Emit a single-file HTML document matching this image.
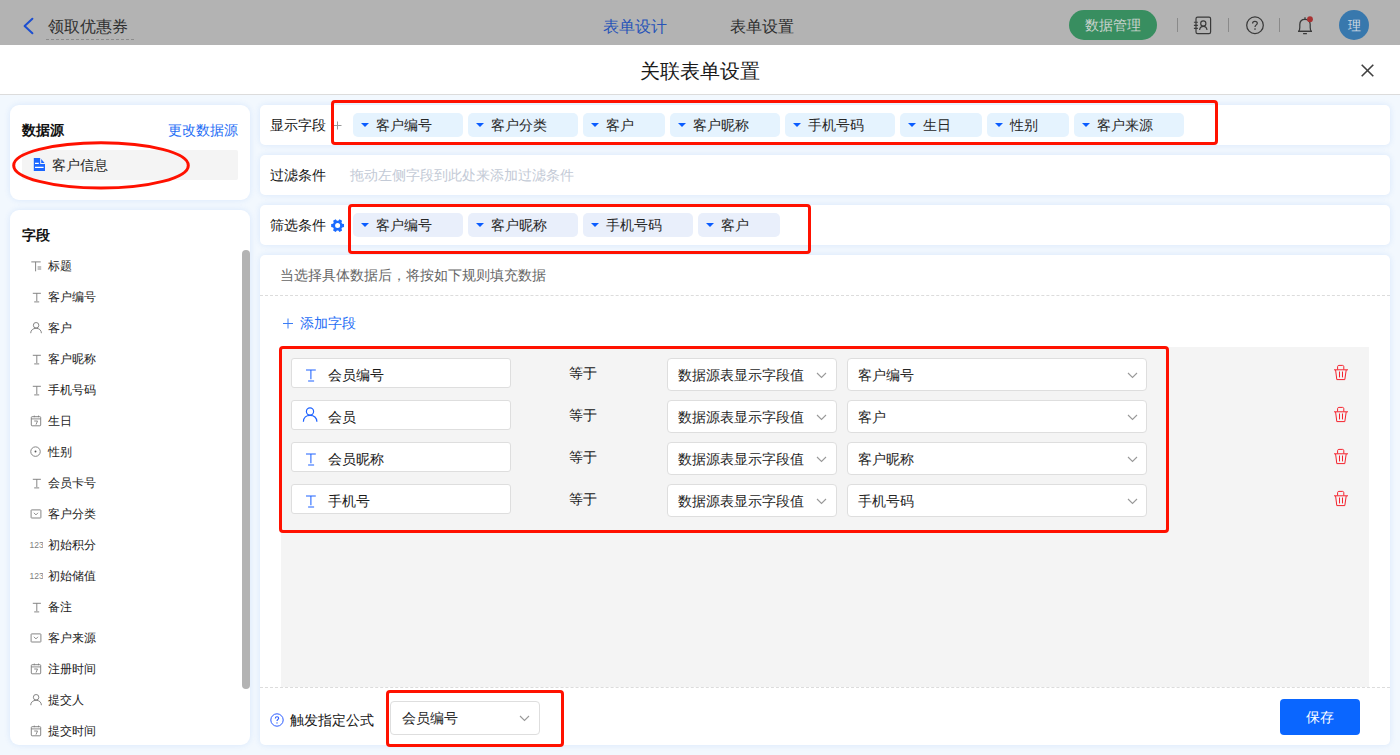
<!DOCTYPE html>
<html><head><meta charset="utf-8">
<style>
*{margin:0;padding:0;box-sizing:border-box}
html,body{width:1400px;height:755px;overflow:hidden}
body{font-family:"Liberation Sans",sans-serif;font-size:14px;color:#333;background:#f2f8fe;position:relative}
.a{position:absolute}
.t{position:absolute;white-space:nowrap;line-height:20px}
#top{left:0;top:0;width:1400px;height:45px;background:#b3b3b3}
#mh{left:0;top:45px;width:1400px;height:50px;background:#fff;border-bottom:1px solid #dcdcdc}
.panel{position:absolute;background:#fff;border-radius:9px;box-shadow:0 0 6px rgba(30,110,230,0.12)}
.rp{position:absolute;background:#fff;border-radius:5px;left:260px;width:1130px;box-shadow:0 0 6px rgba(30,110,230,0.12)}
.tag{position:absolute;height:24px;border-radius:5px;background:#e5f3fe}
.tag i{position:absolute;left:8.3px;top:10px;width:0;height:0;border-left:4.3px solid transparent;border-right:4.3px solid transparent;border-top:4.3px solid #0a5cff}
.tag span{position:absolute;left:23px;top:2px;line-height:20px;color:#262626;white-space:nowrap}
.tag2{background:#e9effb}
.red{position:absolute;border:3px solid #ff1100;border-radius:4px}
.inp{position:absolute;left:291px;width:220px;height:30px;background:#fff;border:1px solid #dedede;border-radius:3px}
.inp span{position:absolute;left:36px;top:6px;line-height:20px;color:#1a1a1a}
.inp svg{position:absolute}
.eq{position:absolute;left:569px;line-height:20px;color:#141414}
.sel{position:absolute;height:33px;background:#fff;border:1px solid #dedede;border-radius:4px}
.sel span{position:absolute;left:10px;top:6px;line-height:20px;color:#262626;white-space:nowrap}
.sel svg{position:absolute;top:13px}
.trash{position:absolute;left:1333px}
</style></head><body>
<div id="top" class="a">
<svg class="a" style="left:20px;top:16px" width="16" height="20" viewBox="0 0 16 20"><path d="M12.4 2.8 L4.6 10 L12.4 17.2" fill="none" stroke="#1d4fd0" stroke-width="2" stroke-linecap="round" stroke-linejoin="round"/></svg>
<div class="t" style="left:48px;top:17px;font-size:16px;color:#2e2e2e">领取优惠券</div>
<div class="a" style="left:46px;top:39px;width:88px;border-top:1px dashed #8c8c8c"></div>
<div class="t" style="left:603px;top:17px;font-size:16px;color:#2754b8">表单设计</div>
<div class="t" style="left:730px;top:17px;font-size:16px;color:#2e2e2e">表单设置</div>
<div class="a" style="left:1069px;top:10px;width:88px;height:30px;border-radius:15px;background:#388e60"></div>
<div class="t" style="left:1085px;top:15px;font-size:14px;color:#cad3ce">数据管理</div>
<div class="a" style="left:1177px;top:18px;width:1px;height:14px;background:#8a8a8a"></div>
<div class="a" style="left:1228px;top:18px;width:1px;height:14px;background:#8a8a8a"></div>
<div class="a" style="left:1279px;top:18px;width:1px;height:14px;background:#8a8a8a"></div>
<div class="a" style="left:1339px;top:10px;width:30px;height:30px;border-radius:15px;background:#3878ad"></div>
<div class="t" style="left:1348px;top:16px;font-size:13px;color:#d0dbe4">理</div>
<svg class="a" style="left:1190px;top:14px" width="24" height="24" viewBox="0 0 24 24"><rect x="6" y="3.2" width="14.6" height="16.4" rx="1.6" stroke="#3a3a3a" stroke-width="1.2" fill="none"/><circle cx="13.3" cy="9.4" r="2.6" stroke="#3a3a3a" stroke-width="1.15" fill="none"/><path d="M9.6 16C9.9 13.6 11.4 12.3 13.3 12.3S16.7 13.6 17 16" stroke="#3a3a3a" stroke-width="1.15" fill="none"/><path d="M3.9 8.3H7.9M3.9 11.4H7.9M3.9 14.4H7.9" stroke="#3a3a3a" stroke-width="1.1"/></svg>
<svg class="a" style="left:1243px;top:13px" width="24" height="24" viewBox="0 0 24 24"><circle cx="12" cy="12.2" r="8.3" stroke="#3a3a3a" stroke-width="1.25" fill="none"/><path d="M9.6 10.4C9.6 9.1 10.6 8.3 11.9 8.3S14.3 9.1 14.3 10.3C14.3 11.8 12 12 12 14" stroke="#3a3a3a" stroke-width="1.25" fill="none"/><circle cx="12" cy="16.1" r="0.8" fill="#3a3a3a"/></svg>
<svg class="a" style="left:1293px;top:13px" width="24" height="24" viewBox="0 0 24 24"><path d="M5.6 18.3C6.6 17.2 6.8 16 6.8 14.4V11.6C6.8 8.4 8.8 6.3 12 6.3S17.2 8.4 17.2 11.6V14.4C17.2 16 17.4 17.2 18.4 18.3Z" stroke="#3a3a3a" stroke-width="1.25" fill="none" stroke-linejoin="round"/><path d="M5 18.3H19M10.1 20.5H13.9M12 4.2V6.3" stroke="#3a3a3a" stroke-width="1.25"/><circle cx="17" cy="6.2" r="2.9" fill="#a83232"/></svg>
</div>
<div id="mh" class="a">
<div class="t" style="left:640px;top:13px;font-size:20px;line-height:26px;color:#1a1a1a">关联表单设置</div>
<svg class="a" style="left:1360px;top:17.5px" width="15" height="15" viewBox="0 0 15 15"><path d="M1.7 1.7 L13.3 13.3 M13.3 1.7 L1.7 13.3" stroke="#404040" stroke-width="1.6"/></svg>
</div>
<div class="panel" style="left:10px;top:105px;width:240px;height:95px"></div>
<div class="t" style="left:22px;top:120px;font-weight:bold;color:#111">数据源</div>
<div class="t" style="left:168px;top:120px;color:#1f6ef5">更改数据源</div>
<div class="a" style="left:22px;top:150px;width:216px;height:30px;background:#f4f4f4;border-radius:2px"></div>
<div class="t" style="left:52px;top:155px;color:#262626">客户信息</div>
<svg class="a" style="left:33px;top:157px" width="13" height="15" viewBox="0 0 13 15"><path d="M0.8 1H7.2V7H12V14H0.8Z" fill="#1a66ff"/><path d="M8.2 2V6H11.6Z" fill="#1a66ff"/><path d="M2 6.4H5.8M2 10.4H10.6" stroke="#fff" stroke-width="1.1"/></svg>
<svg class="a" style="left:0;top:130px" width="200" height="70" viewBox="0 130 200 70"><ellipse cx="101" cy="165.4" rx="87.3" ry="22.6" fill="none" stroke="#ff1100" stroke-width="3"/></svg>
<div class="panel" style="left:10px;top:210px;width:240px;height:535px"></div>
<div class="t" style="left:22px;top:225px;font-weight:bold;color:#111">字段</div>
<div class="a" style="left:242px;top:250px;width:8px;height:439px;border-radius:4px;background:#b3b3b3"></div>
<svg class="a" style="left:29px;top:258.5px" width="14" height="14" viewBox="0 0 14 14"><path d="M2.3 2.9H11.7M6.6 2.9V12.3M8.6 8H12.2M8.6 10H12.2" stroke="#808080" stroke-width="0.95" fill="none"/></svg>
<div class="t" style="left:48px;top:256.0px;font-size:12px;color:#222">标题</div>
<svg class="a" style="left:29px;top:289.5px" width="14" height="14" viewBox="0 0 14 14"><path d="M3.8 3.3H11.9M7.8 3.3V11.1M5.2 11.9H10.2" stroke="#808080" stroke-width="0.95" fill="none"/></svg>
<div class="t" style="left:48px;top:287.0px;font-size:12px;color:#222">客户编号</div>
<svg class="a" style="left:29px;top:320.5px" width="14" height="14" viewBox="0 0 14 14"><circle cx="7.1" cy="4.25" r="2.75" stroke="#808080" stroke-width="0.95" fill="none"/><path d="M1.7 12.2C1.7 9.2 4 7.3 7.1 7.3S12.4 9.2 12.4 12.2" stroke="#808080" stroke-width="0.95" fill="none"/></svg>
<div class="t" style="left:48px;top:318.0px;font-size:12px;color:#222">客户</div>
<svg class="a" style="left:29px;top:351.5px" width="14" height="14" viewBox="0 0 14 14"><path d="M3.8 3.3H11.9M7.8 3.3V11.1M5.2 11.9H10.2" stroke="#808080" stroke-width="0.95" fill="none"/></svg>
<div class="t" style="left:48px;top:349.0px;font-size:12px;color:#222">客户昵称</div>
<svg class="a" style="left:29px;top:382.5px" width="14" height="14" viewBox="0 0 14 14"><path d="M3.8 3.3H11.9M7.8 3.3V11.1M5.2 11.9H10.2" stroke="#808080" stroke-width="0.95" fill="none"/></svg>
<div class="t" style="left:48px;top:380.0px;font-size:12px;color:#222">手机号码</div>
<svg class="a" style="left:29px;top:413.5px" width="14" height="14" viewBox="0 0 14 14"><rect x="2.3" y="2.7" width="9.4" height="9.1" rx="0.8" stroke="#808080" stroke-width="0.95" fill="none"/><path d="M2.3 4.9H11.7M5.3 1.6V3.2M9.5 1.6V3.2M5.2 7H8.5L7 10.6" stroke="#808080" stroke-width="0.9" fill="none"/></svg>
<div class="t" style="left:48px;top:411.0px;font-size:12px;color:#222">生日</div>
<svg class="a" style="left:29px;top:444.5px" width="14" height="14" viewBox="0 0 14 14"><circle cx="6.5" cy="6.6" r="4.75" stroke="#808080" stroke-width="0.95" fill="none"/><circle cx="6.5" cy="6.5" r="0.95" fill="#555"/></svg>
<div class="t" style="left:48px;top:442.0px;font-size:12px;color:#222">性别</div>
<svg class="a" style="left:29px;top:475.5px" width="14" height="14" viewBox="0 0 14 14"><path d="M3.8 3.3H11.9M7.8 3.3V11.1M5.2 11.9H10.2" stroke="#808080" stroke-width="0.95" fill="none"/></svg>
<div class="t" style="left:48px;top:473.0px;font-size:12px;color:#222">会员卡号</div>
<svg class="a" style="left:29px;top:506.5px" width="14" height="14" viewBox="0 0 14 14"><rect x="2.1" y="2.9" width="9.8" height="8.1" rx="0.5" stroke="#808080" stroke-width="0.95" fill="none"/><path d="M4.9 5.8L6.95 7.9L9 5.8" stroke="#808080" stroke-width="0.9" fill="none"/></svg>
<div class="t" style="left:48px;top:504.0px;font-size:12px;color:#222">客户分类</div>
<svg class="a" style="left:29px;top:537.5px" width="14" height="14" viewBox="0 0 14 14"><text x="0.5" y="9.5" font-size="8.5" font-family="Liberation Sans" fill="#808080">123</text></svg>
<div class="t" style="left:48px;top:535.0px;font-size:12px;color:#222">初始积分</div>
<svg class="a" style="left:29px;top:568.5px" width="14" height="14" viewBox="0 0 14 14"><text x="0.5" y="9.5" font-size="8.5" font-family="Liberation Sans" fill="#808080">123</text></svg>
<div class="t" style="left:48px;top:566.0px;font-size:12px;color:#222">初始储值</div>
<svg class="a" style="left:29px;top:599.5px" width="14" height="14" viewBox="0 0 14 14"><path d="M3.8 3.3H11.9M7.8 3.3V11.1M5.2 11.9H10.2" stroke="#808080" stroke-width="0.95" fill="none"/></svg>
<div class="t" style="left:48px;top:597.0px;font-size:12px;color:#222">备注</div>
<svg class="a" style="left:29px;top:630.5px" width="14" height="14" viewBox="0 0 14 14"><rect x="2.1" y="2.9" width="9.8" height="8.1" rx="0.5" stroke="#808080" stroke-width="0.95" fill="none"/><path d="M4.9 5.8L6.95 7.9L9 5.8" stroke="#808080" stroke-width="0.9" fill="none"/></svg>
<div class="t" style="left:48px;top:628.0px;font-size:12px;color:#222">客户来源</div>
<svg class="a" style="left:29px;top:661.5px" width="14" height="14" viewBox="0 0 14 14"><rect x="2.3" y="2.7" width="9.4" height="9.1" rx="0.8" stroke="#808080" stroke-width="0.95" fill="none"/><path d="M2.3 4.9H11.7M5.3 1.6V3.2M9.5 1.6V3.2M5.2 7H8.5L7 10.6" stroke="#808080" stroke-width="0.9" fill="none"/></svg>
<div class="t" style="left:48px;top:659.0px;font-size:12px;color:#222">注册时间</div>
<svg class="a" style="left:29px;top:692.5px" width="14" height="14" viewBox="0 0 14 14"><circle cx="7.1" cy="4.25" r="2.75" stroke="#808080" stroke-width="0.95" fill="none"/><path d="M1.7 12.2C1.7 9.2 4 7.3 7.1 7.3S12.4 9.2 12.4 12.2" stroke="#808080" stroke-width="0.95" fill="none"/></svg>
<div class="t" style="left:48px;top:690.0px;font-size:12px;color:#222">提交人</div>
<svg class="a" style="left:29px;top:723.5px" width="14" height="14" viewBox="0 0 14 14"><rect x="2.3" y="2.7" width="9.4" height="9.1" rx="0.8" stroke="#808080" stroke-width="0.95" fill="none"/><path d="M2.3 4.9H11.7M5.3 1.6V3.2M9.5 1.6V3.2M5.2 7H8.5L7 10.6" stroke="#808080" stroke-width="0.9" fill="none"/></svg>
<div class="t" style="left:48px;top:721.0px;font-size:12px;color:#222">提交时间</div>
<div class="rp" style="top:105px;height:40px"></div>
<div class="rp" style="top:155px;height:40px"></div>
<div class="rp" style="top:205px;height:40px"></div>
<div class="rp" style="top:255px;height:490px"></div>
<div class="t" style="left:270px;top:115px;color:#141414">显示字段</div>
<svg class="a" style="left:333px;top:121px" width="9" height="9" viewBox="0 0 9 9"><path d="M4.5 0.5V8.5M0.5 4.5H8.5" stroke="#999" stroke-width="1"/></svg>
<div class="t" style="left:270px;top:165px;color:#141414">过滤条件</div>
<div class="t" style="left:350px;top:165px;color:#c3cad6">拖动左侧字段到此处来添加过滤条件</div>
<div class="t" style="left:270px;top:215px;color:#141414">筛选条件</div>
<svg class="a" style="left:330.9px;top:218.9px" width="14" height="14" viewBox="0 0 14 14"><path fill-rule="evenodd" d="M11.14 4.76 L13.03 5.12 L13.03 8.08 L11.14 8.44 L10.46 9.62 L11.10 11.43 L8.53 12.91 L7.28 11.45 L5.92 11.45 L4.67 12.91 L2.10 11.43 L2.74 9.62 L2.06 8.44 L0.17 8.08 L0.17 5.12 L2.06 4.76 L2.74 3.58 L2.10 1.77 L4.67 0.29 L5.92 1.75 L7.28 1.75 L8.53 0.29 L11.10 1.77 L10.46 3.58Z M6.6 4.1A2.5 2.5 0 1 0 6.6 9.1A2.5 2.5 0 1 0 6.6 4.1Z" fill="#1a6bff"/></svg>
<div class="tag" style="left:353px;top:113px;width:110px"><i></i><span>客户编号</span></div>
<div class="tag" style="left:468px;top:113px;width:110px"><i></i><span>客户分类</span></div>
<div class="tag" style="left:583px;top:113px;width:82px"><i></i><span>客户</span></div>
<div class="tag" style="left:670px;top:113px;width:110px"><i></i><span>客户昵称</span></div>
<div class="tag" style="left:785px;top:113px;width:110px"><i></i><span>手机号码</span></div>
<div class="tag" style="left:900px;top:113px;width:82px"><i></i><span>生日</span></div>
<div class="tag" style="left:987px;top:113px;width:82px"><i></i><span>性别</span></div>
<div class="tag" style="left:1074px;top:113px;width:110px"><i></i><span>客户来源</span></div>
<div class="tag tag2" style="left:353px;top:213px;width:110px"><i></i><span>客户编号</span></div>
<div class="tag tag2" style="left:468px;top:213px;width:110px"><i></i><span>客户昵称</span></div>
<div class="tag tag2" style="left:583px;top:213px;width:110px"><i></i><span>手机号码</span></div>
<div class="tag tag2" style="left:698px;top:213px;width:82px"><i></i><span>客户</span></div>
<div class="red" style="left:331px;top:100px;width:887px;height:45px"></div>
<div class="red" style="left:348px;top:204px;width:463px;height:49.5px"></div>
<div class="t" style="left:280px;top:265px;color:#666">当选择具体数据后，将按如下规则填充数据</div>
<div class="a" style="left:260px;top:295px;width:1130px;border-top:1px dashed #dcdcdc"></div>
<svg class="a" style="left:283px;top:318px" width="10" height="11" viewBox="0 0 10 11"><path d="M5 0.5V10.5M0 5.5H10" stroke="#3a7cf5" stroke-width="1"/></svg>
<div class="t" style="left:300px;top:313px;color:#1f6ef5">添加字段</div>
<div class="a" style="left:281px;top:347px;width:1088px;height:340px;background:#f4f4f4"></div>
<div class="inp" style="top:358px"><svg width="14" height="17" viewBox="0 0 14 17" style="left:12px;top:6px"><path d="M2 4.9H11.8M6.9 4.9V14.2M4.1 16H10.1" stroke="#1f63ff" stroke-width="1.05" fill="none"/></svg><span>会员编号</span></div>
<div class="eq" style="top:363px">等于</div>
<div class="sel" style="left:667px;top:358px;width:170px"><span>数据源表显示字段值</span><svg width="11" height="7" viewBox="0 0 11 7" style="left:148px"><path d="M1 1L5.5 5.5L10 1" stroke="#999" stroke-width="1.1" fill="none"/></svg></div>
<div class="sel" style="left:847px;top:358px;width:300px"><span>客户编号</span><svg width="11" height="7" viewBox="0 0 11 7" style="left:279px"><path d="M1 1L5.5 5.5L10 1" stroke="#999" stroke-width="1.1" fill="none"/></svg></div>
<svg class="trash" style="top:364px" width="16" height="17" viewBox="1333 364 16 17"><g transform="translate(0,0)" stroke="#f5222d" fill="none" stroke-width="1"><path d="M1337.6 369.5V366.6C1337.6 365.9 1338.1 365.4 1338.8 365.4H1342.6C1343.3 365.4 1343.8 365.9 1343.8 366.6V369.5"/><path d="M1334 369.8H1348"/><path d="M1335.6 370L1336.8 379.6H1344.8L1346.2 370"/><path d="M1339.5 371.5V377.4M1342.5 371.5V377.4"/></g></svg>
<div class="inp" style="top:400px"><svg width="18" height="20" viewBox="0 0 18 20" style="left:9px;top:2px"><circle cx="9" cy="8.5" r="3.6" stroke="#1f63ff" stroke-width="1.2" fill="none"/><path d="M2.4 18.7C2.4 14.6 5.4 12.4 9 12.4S15.6 14.6 15.9 18.7" stroke="#1f63ff" stroke-width="1.2" fill="none"/></svg><span>会员</span></div>
<div class="eq" style="top:405px">等于</div>
<div class="sel" style="left:667px;top:400px;width:170px"><span>数据源表显示字段值</span><svg width="11" height="7" viewBox="0 0 11 7" style="left:148px"><path d="M1 1L5.5 5.5L10 1" stroke="#999" stroke-width="1.1" fill="none"/></svg></div>
<div class="sel" style="left:847px;top:400px;width:300px"><span>客户</span><svg width="11" height="7" viewBox="0 0 11 7" style="left:279px"><path d="M1 1L5.5 5.5L10 1" stroke="#999" stroke-width="1.1" fill="none"/></svg></div>
<svg class="trash" style="top:406px" width="16" height="17" viewBox="1333 406 16 17"><g transform="translate(0,42)" stroke="#f5222d" fill="none" stroke-width="1"><path d="M1337.6 369.5V366.6C1337.6 365.9 1338.1 365.4 1338.8 365.4H1342.6C1343.3 365.4 1343.8 365.9 1343.8 366.6V369.5"/><path d="M1334 369.8H1348"/><path d="M1335.6 370L1336.8 379.6H1344.8L1346.2 370"/><path d="M1339.5 371.5V377.4M1342.5 371.5V377.4"/></g></svg>
<div class="inp" style="top:442px"><svg width="14" height="17" viewBox="0 0 14 17" style="left:12px;top:6px"><path d="M2 4.9H11.8M6.9 4.9V14.2M4.1 16H10.1" stroke="#1f63ff" stroke-width="1.05" fill="none"/></svg><span>会员昵称</span></div>
<div class="eq" style="top:447px">等于</div>
<div class="sel" style="left:667px;top:442px;width:170px"><span>数据源表显示字段值</span><svg width="11" height="7" viewBox="0 0 11 7" style="left:148px"><path d="M1 1L5.5 5.5L10 1" stroke="#999" stroke-width="1.1" fill="none"/></svg></div>
<div class="sel" style="left:847px;top:442px;width:300px"><span>客户昵称</span><svg width="11" height="7" viewBox="0 0 11 7" style="left:279px"><path d="M1 1L5.5 5.5L10 1" stroke="#999" stroke-width="1.1" fill="none"/></svg></div>
<svg class="trash" style="top:448px" width="16" height="17" viewBox="1333 448 16 17"><g transform="translate(0,84)" stroke="#f5222d" fill="none" stroke-width="1"><path d="M1337.6 369.5V366.6C1337.6 365.9 1338.1 365.4 1338.8 365.4H1342.6C1343.3 365.4 1343.8 365.9 1343.8 366.6V369.5"/><path d="M1334 369.8H1348"/><path d="M1335.6 370L1336.8 379.6H1344.8L1346.2 370"/><path d="M1339.5 371.5V377.4M1342.5 371.5V377.4"/></g></svg>
<div class="inp" style="top:484px"><svg width="14" height="17" viewBox="0 0 14 17" style="left:12px;top:6px"><path d="M2 4.9H11.8M6.9 4.9V14.2M4.1 16H10.1" stroke="#1f63ff" stroke-width="1.05" fill="none"/></svg><span>手机号</span></div>
<div class="eq" style="top:489px">等于</div>
<div class="sel" style="left:667px;top:484px;width:170px"><span>数据源表显示字段值</span><svg width="11" height="7" viewBox="0 0 11 7" style="left:148px"><path d="M1 1L5.5 5.5L10 1" stroke="#999" stroke-width="1.1" fill="none"/></svg></div>
<div class="sel" style="left:847px;top:484px;width:300px"><span>手机号码</span><svg width="11" height="7" viewBox="0 0 11 7" style="left:279px"><path d="M1 1L5.5 5.5L10 1" stroke="#999" stroke-width="1.1" fill="none"/></svg></div>
<svg class="trash" style="top:490px" width="16" height="17" viewBox="1333 490 16 17"><g transform="translate(0,126)" stroke="#f5222d" fill="none" stroke-width="1"><path d="M1337.6 369.5V366.6C1337.6 365.9 1338.1 365.4 1338.8 365.4H1342.6C1343.3 365.4 1343.8 365.9 1343.8 366.6V369.5"/><path d="M1334 369.8H1348"/><path d="M1335.6 370L1336.8 379.6H1344.8L1346.2 370"/><path d="M1339.5 371.5V377.4M1342.5 371.5V377.4"/></g></svg>
<div class="red" style="left:279px;top:346px;width:890px;height:187px"></div>
<div class="a" style="left:260px;top:687px;width:1130px;border-top:1px dashed #dcdcdc"></div>
<svg class="a" style="left:269.3px;top:711.5px" width="16" height="16" viewBox="0 0 16 16"><circle cx="8" cy="8" r="6.2" stroke="#2a5cff" stroke-width="1" fill="none"/><path d="M6.3 6.4C6.3 5.3 7.1 4.7 8 4.7S9.7 5.3 9.7 6.2C9.7 7.3 8 7.5 8 9" stroke="#2a5cff" stroke-width="1.1" fill="none"/><circle cx="8" cy="10.9" r="0.7" fill="#2a5cff"/></svg>
<div class="t" style="left:290px;top:710px;color:#141414">触发指定公式</div>
<div class="sel" style="left:390px;top:701px;width:150px;height:34px"><span style="left:11px;top:6px">会员编号</span><svg width="11" height="7" viewBox="0 0 11 7" style="top:13px;left:128px"><path d="M1 1L5.5 5.5L10 1" stroke="#999" stroke-width="1.1" fill="none"/></svg></div>
<div class="red" style="left:386px;top:690px;width:178px;height:57px"></div>
<div class="a" style="left:1280px;top:699px;width:80px;height:36px;background:#0a66ff;border-radius:4px"></div>
<div class="t" style="left:1306px;top:707px;color:#fff">保存</div>
</body></html>
